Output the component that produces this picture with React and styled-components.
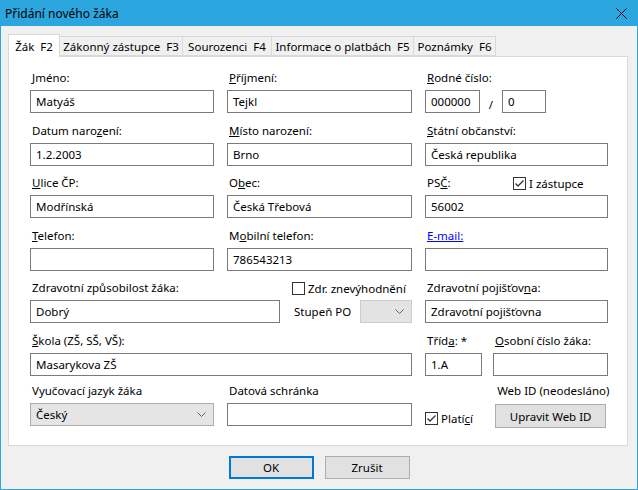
import React from 'react';
import styled, { createGlobalStyle } from 'styled-components';

const GlobalStyle = createGlobalStyle`
  html, body { margin: 0; padding: 0; background: #ffffff; }
  body {
    font-family: "Noto Sans", "DejaVu Sans", sans-serif;
    font-size: 11.5px;
    color: #000;
  }
  * { box-sizing: border-box; }
`;

const Window = styled.div`
  width: 638px;
  height: 490px;
  background: #2ba6df;
  padding: 0 1px 1px 1px;
  display: flex;
  flex-direction: column;
`;

const TitleBar = styled.div`
  height: 26px;
  display: flex;
  align-items: center;
  padding: 0 10px 0 4px;
  font-size: 12px;
  color: #000;
  svg { margin-left: auto; }
`;

const Client = styled.div`
  flex: 1;
  background: #f0f0f0;
  padding: 8px 9px 0 7px;
  display: flex;
  flex-direction: column;
`;

const Tabs = styled.div`
  height: 22px;
  display: flex;
  align-items: flex-end;
  position: relative;
  z-index: 1;
`;

const Tab = styled.div`
  width: ${p => p.$w}px;
  height: ${p => (p.$active ? 23 : 20)}px;
  margin-bottom: ${p => (p.$active ? -1 : 0)}px;
  margin-left: ${p => (p.$first ? 0 : -1)}px;
  border: 1px solid #d9d9d9;
  border-bottom: ${p => (p.$active ? 'none' : '1px solid #d9d9d9')};
  background: ${p => (p.$active ? '#ffffff' : '#f0f0f0')};
  display: flex;
  align-items: center;
  justify-content: center;
  white-space: nowrap;
  padding-top: ${p => (p.$active ? 0 : 1)}px;
  span { margin-left: 6px; }
`;

const Panel = styled.div`
  height: 390px;
  background: #fff;
  border: 1px solid #d9d9d9;
  padding: 13px 19px 0 21px;
  display: grid;
  grid-template-columns: 184px 185px 183px;
  column-gap: 13px;
  row-gap: 9.5px;
  align-content: start;
`;

const Field = styled.div`
  display: flex;
  flex-direction: column;
  gap: 4px;
  min-width: 0;
  grid-column: ${p => p.$span || 'auto'};
  margin-top: ${p => p.$shift || 0}px;
`;

const Label = styled.div`
  height: 16px;
  line-height: 16px;
  white-space: nowrap;
  color: ${p => (p.$link ? '#0000ff' : '#000')};
  text-decoration: ${p => (p.$link ? 'underline' : 'none')};
  padding-left: 2px;
`;

const Key = styled.span`
  text-decoration: underline;
`;

const Input = styled.div`
  width: ${p => (p.$w ? `${p.$w}px` : '100%')};
  height: 23px;
  border: 1px solid #7a7a7a;
  background: #fff;
  padding: 0 5px;
  display: flex;
  align-items: center;
  white-space: nowrap;
  flex: none;
`;

const Combo = styled.div`
  width: ${p => (p.$w ? `${p.$w}px` : '100%')};
  height: 23px;
  border: 1px solid ${p => (p.$disabled ? '#cccccc' : '#adadad')};
  background: ${p => (p.$disabled ? '#e3e3e3' : '#e5e5e5')};
  padding: 0 7px 0 5px;
  display: flex;
  align-items: center;
  justify-content: space-between;
  margin-left: ${p => (p.$push ? 'auto' : '0')};
  svg { margin-left: auto; }
`;

const InlineRow = styled.div`
  display: flex;
  align-items: ${p => p.$align || 'center'};
  gap: ${p => p.$gap || 0}px;
  height: ${p => (p.$h ? `${p.$h}px` : 'auto')};
`;

const Slash = styled.div`
  width: 22px;
  text-align: center;
  padding-top: 6px;
`;

const Box = styled.span`
  width: 13px;
  height: 13px;
  border: 1px solid #333;
  background: #fff;
  display: inline-flex;
  align-items: center;
  justify-content: center;
  flex: none;
`;

const CheckWrap = styled.label`
  display: flex;
  align-items: center;
  gap: 3px;
  height: 16px;
  white-space: nowrap;
`;

const Side = styled.div`
  display: flex;
  flex-direction: column;
  gap: 4px;
  padding-left: 12px;
  flex: 1;
`;

const PlainText = styled.span`
  white-space: nowrap;
  padding-left: 2px;
`;

const Split = styled.div`
  display: flex;
  gap: ${p => p.$gap}px;
`;

const Button = styled.div`
  width: ${p => p.$w}px;
  height: ${p => p.$h || 23}px;
  background: #e1e1e1;
  border: ${p => (p.$default ? '2px solid #0078d7' : '1px solid #adadad')};
  display: flex;
  align-items: center;
  justify-content: center;
  white-space: nowrap;
`;

const ButtonRow = styled.div`
  display: flex;
  justify-content: center;
  gap: 11px;
  padding-top: 10px;
  padding-left: 2px;
`;

const Chevron = () => (
  <svg width="9" height="5" viewBox="0 0 9 5">
    <polyline points="0.5,0.5 4.5,4.5 8.5,0.5" fill="none" stroke="#606060" strokeWidth="1" />
  </svg>
);

const Check = ({ checked }) => (
  <Box>
    {checked && (
      <svg width="11" height="11" viewBox="0 0 11 11">
        <polyline points="1.5,5.5 4,8 9.5,2.5" fill="none" stroke="#333" strokeWidth="1.3" />
      </svg>
    )}
  </Box>
);

const tabs = [
  { t: 'Žák', k: 'F2', w: 52 },
  { t: 'Zákonný zástupce', k: 'F3', w: 124 },
  { t: 'Sourozenci', k: 'F4', w: 90 },
  { t: 'Informace o platbách', k: 'F5', w: 143 },
  { t: 'Poznámky', k: 'F6', w: 83 },
];

export default function App() {
  return (
    <>
      <GlobalStyle />
      <Window>
        <TitleBar>
          Přidání nového žáka
          <svg width="11" height="11" viewBox="0 0 11 11">
            <path d="M0.5 0.5 L10.5 10.5 M10.5 0.5 L0.5 10.5" stroke="#000" strokeWidth="1" />
          </svg>
        </TitleBar>
        <Client>
          <Tabs>
            {tabs.map((tab, i) => (
              <Tab key={tab.k} $w={tab.w} $active={i === 0} $first={i === 0}>
                {tab.t}<span>{tab.k}</span>
              </Tab>
            ))}
          </Tabs>
          <Panel>
            <Field>
              <Label><Key>J</Key>méno:</Label>
              <Input>Matyáš</Input>
            </Field>
            <Field>
              <Label><Key>P</Key>říjmení:</Label>
              <Input>Tejkl</Input>
            </Field>
            <Field>
              <Label><Key>R</Key>odné číslo:</Label>
              <InlineRow>
                <Input $w={55}>000000</Input>
                <Slash>/</Slash>
                <Input $w={44}>0</Input>
              </InlineRow>
            </Field>

            <Field>
              <Label>Datum naro<Key>z</Key>ení:</Label>
              <Input>1.2.2003</Input>
            </Field>
            <Field>
              <Label><Key>M</Key>ísto narození:</Label>
              <Input>Brno</Input>
            </Field>
            <Field>
              <Label><Key>S</Key>tátní občanství:</Label>
              <Input>Česká republika</Input>
            </Field>

            <Field>
              <Label><Key>U</Key>lice ČP:</Label>
              <Input>Modřínská</Input>
            </Field>
            <Field>
              <Label>O<Key>b</Key>ec:</Label>
              <Input>Česká Třebová</Input>
            </Field>
            <Field>
              <InlineRow $h={16}>
                <Label style={{ width: 88 }}>PS<Key>Č</Key>:</Label>
                <CheckWrap><Check checked /><span>I zástupce</span></CheckWrap>
              </InlineRow>
              <Input>56002</Input>
            </Field>

            <Field>
              <Label><Key>T</Key>elefon:</Label>
              <Input />
            </Field>
            <Field>
              <Label>M<Key>o</Key>bilní telefon:</Label>
              <Input>786543213</Input>
            </Field>
            <Field>
              <Label $link>E-mail:</Label>
              <Input />
            </Field>

            <Field $span="1 / 3">
              <InlineRow $align="flex-start">
                <Field>
                  <Label>Zdravotní způsobilost žáka:</Label>
                  <Input $w={250}>Dobrý</Input>
                </Field>
                <Side>
                  <CheckWrap><Check /><span>Zdr. znevýhodnění</span></CheckWrap>
                  <InlineRow $h={23}>
                    <PlainText>Stupeň PO</PlainText>
                    <Combo $w={52} $disabled $push><Chevron /></Combo>
                  </InlineRow>
                </Side>
              </InlineRow>
            </Field>
            <Field>
              <Label>Zdravotní pojišťov<Key>n</Key>a:</Label>
              <Input>Zdravotní pojišťovna</Input>
            </Field>

            <Field $span="1 / 3">
              <Label><Key>Š</Key>kola (ZŠ, SŠ, VŠ):</Label>
              <Input>Masarykova ZŠ</Input>
            </Field>
            <Split $gap={11}>
              <Field style={{ width: 57 }}>
                <Label>Tříd<Key>a</Key>: *</Label>
                <Input>1.A</Input>
              </Field>
              <Field style={{ flex: 1 }}>
                <Label><Key>O</Key>sobní číslo žáka:</Label>
                <Input />
              </Field>
            </Split>

            <Field $shift={-2}>
              <Label>Vyučovací jazyk žáka</Label>
              <Combo>Český<Chevron /></Combo>
            </Field>
            <Field $shift={-2}>
              <Label>Datová schránka</Label>
              <Input />
            </Field>
            <Split $gap={0} style={{ marginTop: -2 }}>
              <InlineRow $align="flex-start" style={{ width: 71, paddingTop: 27 }}>
                <CheckWrap><Check checked /><span>Platí<Key>c</Key>í</span></CheckWrap>
              </InlineRow>
              <Field style={{ gap: 5 }}>
                <Label>Web ID (neodesláno)</Label>
                <Button $w={111} $h={24}>Upravit Web ID</Button>
              </Field>
            </Split>
          </Panel>
          <ButtonRow>
            <Button $w={85} $default>OK</Button>
            <Button $w={85}>Zrušit</Button>
          </ButtonRow>
        </Client>
      </Window>
    </>
  );
}
